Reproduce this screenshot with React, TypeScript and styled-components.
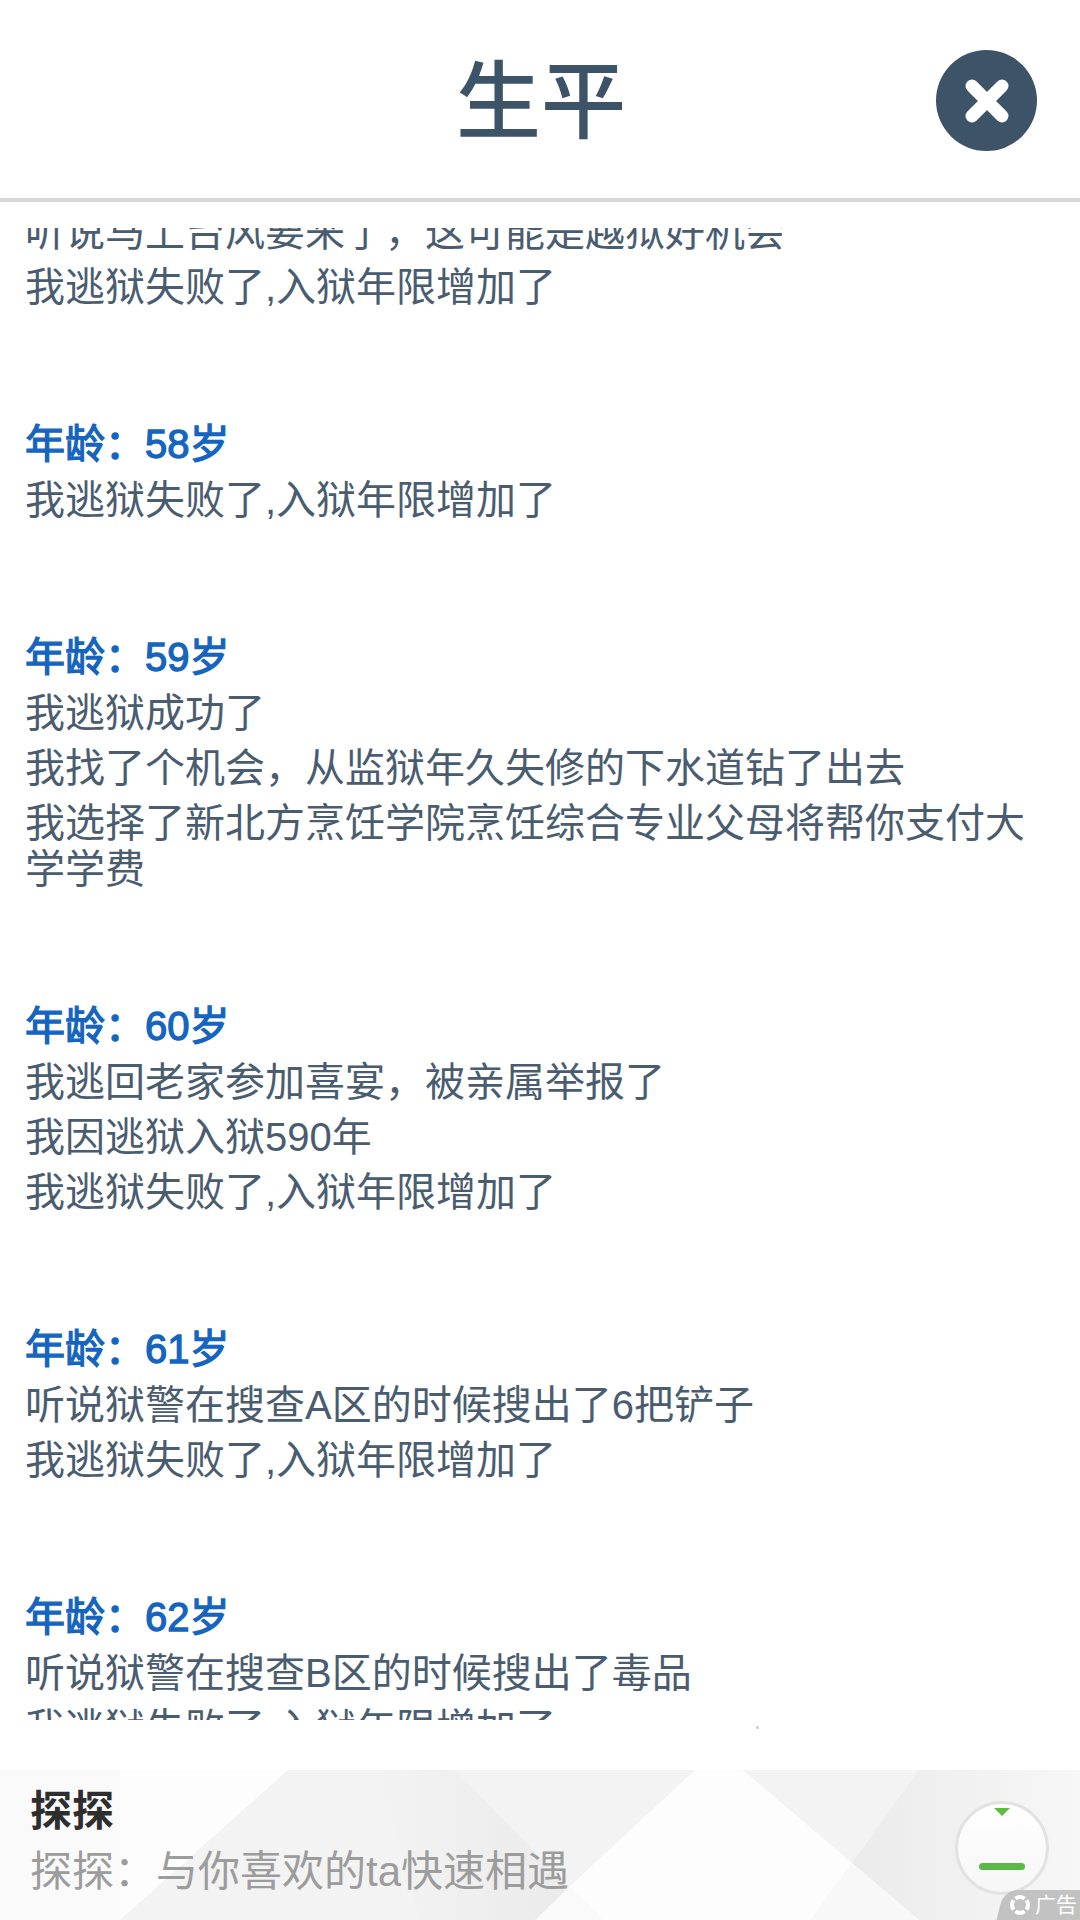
import styled, { createGlobalStyle } from "styled-components";

const GlobalStyle = createGlobalStyle`
  html, body {
    margin: 0;
    padding: 0;
    background: #ffffff;
  }
  body {
    font-family: "Liberation Sans", "Noto Sans CJK SC", sans-serif;
  }
`;

const Page = styled.div`
  display: flex;
  flex-direction: column;
  width: 1080px;
  height: 1920px;
  overflow: hidden;
`;

const Header = styled.header`
  position: relative;
  display: flex;
  align-items: center;
  justify-content: center;
  flex: none;
  height: 198px;
  border-bottom: 4px solid #d8dadc;
`;

const Title = styled.h1`
  margin: 6px 0 0 2px;
  font-size: 85px;
  font-weight: 500;
  line-height: 1;
  color: #3d5368;
`;

const CloseButton = styled.div`
  position: absolute;
  top: 50px;
  right: 43px;
  display: flex;
  align-items: center;
  justify-content: center;
  width: 101px;
  height: 101px;
  border-radius: 50%;
  background: #3d5368;
  filter: blur(0.6px);
`;

const Scroller = styled.div`
  flex: none;
  height: 1492px;
  margin-top: 26px;
  overflow: hidden;
`;

const List = styled.div`
  display: flex;
  flex-direction: column;
  gap: 111px;
  margin-top: -19px;
  padding: 0 25px;
`;

const Year = styled.section`
  display: flex;
  flex-direction: column;
  gap: 9px;
`;

const Age = styled.h2`
  margin: 0 0 1px;
  font-size: 40px;
  font-weight: 400;
  line-height: 46px;
  color: #1565c0;
  -webkit-text-stroke: 1.3px #1565c0;
`;

const Line = styled.p`
  margin: 0;
  font-size: 40px;
  line-height: 46px;
  color: #4a5d70;
`;

const Gap = styled.div`
  position: relative;
  flex: none;
  height: 50px;
`;

const Speck = styled.span`
  position: absolute;
  left: 756px;
  top: 6px;
  width: 3px;
  height: 3px;
  background: #d4d4d4;
`;

const Ad = styled.div`
  position: relative;
  display: flex;
  align-items: center;
  justify-content: space-between;
  flex: none;
  height: 150px;
  padding: 0 31px 0 30px;
  overflow: hidden;
  background: #f3f3f3;
`;

const AdBackground = styled.svg`
  position: absolute;
  inset: 0;
`;

const AdText = styled.div`
  position: relative;
  display: flex;
  flex-direction: column;
  gap: 10px;
  margin-top: -5px;
`;

const AdTitle = styled.div`
  font-size: 42px;
  font-weight: 700;
  line-height: 48px;
  color: #2e2e2e;
`;

const AdSubtitle = styled.div`
  font-size: 42px;
  line-height: 52px;
  color: #9c9c9c;
`;

const AdCircle = styled.div`
  position: relative;
  display: flex;
  flex-direction: column;
  align-items: center;
  justify-content: space-between;
  box-sizing: border-box;
  width: 94px;
  height: 94px;
  margin-top: 6px;
  padding: 4px 0 22px;
  border: 3px solid #e2e2e2;
  border-radius: 50%;
  background: linear-gradient(#ffffff, #f6f6f6);
`;

const Arrow = styled.span`
  width: 0;
  height: 0;
  border-left: 8px solid transparent;
  border-right: 8px solid transparent;
  border-top: 8px solid #5cbd3f;
`;

const Bar = styled.span`
  width: 46px;
  height: 7px;
  border-radius: 4px;
  background: #5cb848;
`;

const AdBadge = styled.div`
  position: absolute;
  right: 0;
  bottom: 0;
  display: flex;
  align-items: center;
  gap: 4px;
  box-sizing: border-box;
  width: 84px;
  height: 30px;
  padding-left: 13px;
  overflow: hidden;

  &::before {
    content: "";
    position: absolute;
    left: 3px;
    top: 0;
    width: 100px;
    height: 40px;
    border-top-left-radius: 14px;
    background: #c2c2c2;
    transform: skewX(-14deg);
  }
`;

const BadgeIcon = styled.svg`
  position: relative;
  flex: none;
`;

const BadgeLabel = styled.span`
  position: relative;
  font-size: 21px;
  line-height: 30px;
  color: #ffffff;
  white-space: nowrap;
`;

type YearEntry = { age?: number; lines: string[] };

const FAILED = "我逃狱失败了,入狱年限增加了";

const years: YearEntry[] = [
  { lines: ["听说马上台风要来了，这可能是越狱好机会", FAILED] },
  { age: 58, lines: [FAILED] },
  {
    age: 59,
    lines: [
      "我逃狱成功了",
      "我找了个机会，从监狱年久失修的下水道钻了出去",
      "我选择了新北方烹饪学院烹饪综合专业父母将帮你支付大学学费",
    ],
  },
  {
    age: 60,
    lines: ["我逃回老家参加喜宴，被亲属举报了", "我因逃狱入狱590年", FAILED],
  },
  { age: 61, lines: ["听说狱警在搜查A区的时候搜出了6把铲子", FAILED] },
  { age: 62, lines: ["听说狱警在搜查B区的时候搜出了毒品", FAILED] },
];

function App() {
  return (
    <Page>
      <GlobalStyle />
      <Header>
        <Title>生平</Title>
        <CloseButton>
          <svg width="44" height="44" viewBox="0 0 44 44">
            <path
              d="M7 7 L37 37 M37 7 L7 37"
              stroke="#ffffff"
              strokeWidth="13"
              strokeLinecap="round"
              fill="none"
            />
          </svg>
        </CloseButton>
      </Header>

      <Scroller>
        <List>
          {years.map((year, i) => (
            <Year key={i}>
              {year.age !== undefined && <Age>年龄：{year.age}岁</Age>}
              {year.lines.map((line, j) => (
                <Line key={j}>{line}</Line>
              ))}
            </Year>
          ))}
        </List>
      </Scroller>

      <Gap>
        <Speck />
      </Gap>

      <Ad>
        <AdBackground width="1080" height="150" viewBox="0 0 1080 150">
          <defs>
            <linearGradient id="wedge" x1="0" y1="0" x2="1" y2="0">
              <stop offset="0" stopColor="#f3f3f3" />
              <stop offset="1" stopColor="#e9e9e9" />
            </linearGradient>
            <linearGradient id="side" x1="0" y1="0" x2="1" y2="0">
              <stop offset="0" stopColor="#ebebeb" />
              <stop offset="1" stopColor="#f7f7f7" />
            </linearGradient>
          </defs>
          <polygon points="0,0 120,0 120,150 0,150" fill="#fafafa" />
          <polygon points="120,0 288,0 120,150" fill="#fdfdfd" />
          <polygon points="379,0 455,0 569,117 604,150 535,150 420,150" fill="url(#wedge)" />
          <polygon points="695,0 743,0 919,150 604,150 569,117" fill="#fdfdfd" />
          <polygon points="569,117 604,150 535,150" fill="#fafafa" />
          <polygon points="919,0 1080,0 1080,150 919,150 852,93" fill="url(#side)" />
          <polygon points="852,93 919,150 810,150" fill="#f8f8f8" />
        </AdBackground>
        <AdText>
          <AdTitle>探探</AdTitle>
          <AdSubtitle>探探：与你喜欢的ta快速相遇</AdSubtitle>
        </AdText>
        <AdCircle>
          <Arrow />
          <Bar />
        </AdCircle>
        <AdBadge>
          <BadgeIcon width="22" height="22" viewBox="0 0 22 22">
            <circle
              cx="11"
              cy="11"
              r="8"
              pathLength={100}
              stroke="#ffffff"
              strokeWidth="4"
              strokeDasharray="20 5"
              strokeDashoffset="10"
              fill="none"
            />
          </BadgeIcon>
          <BadgeLabel>广告</BadgeLabel>
        </AdBadge>
      </Ad>
    </Page>
  );
}

export default App;
